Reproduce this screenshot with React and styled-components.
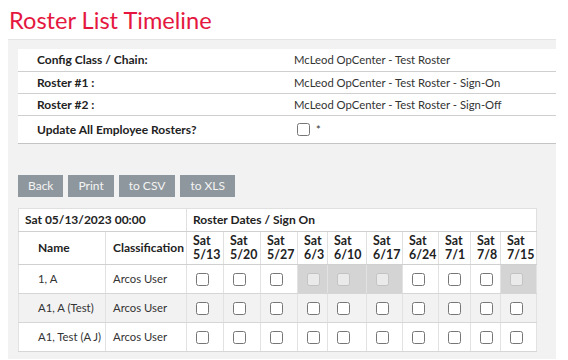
import React from "react";
import styled, { createGlobalStyle } from "styled-components";

const Global = createGlobalStyle`
  html, body { margin: 0; padding: 0; background: #fff; }
  body { font-family: Lato, "Open Sans", Arial, sans-serif; color: #222; }
`;

const Page = styled.div`
  padding: 0 8px;
  width: 548px;
`;

const Title = styled.h1`
  margin: 7px 0 6px 1px;
  font-size: 23.6px;
  line-height: 26px;
  font-weight: 400;
  color: #e5173f;
`;

const Panel = styled.div`
  background: #f2f2f2;
  border-top: 1px solid #e4e4e4;
  padding: 9px 0 7px 10px;
`;

const InfoTable = styled.table`
  width: 538px;
  border-collapse: collapse;
  table-layout: fixed;
  background: #fff;
  font-size: 12px;
`;

const InfoRow = styled.tr`
  height: ${(p) => (p.$tall ? "28px" : "22px")};
  border-bottom: 1px solid ${(p) => (p.$last ? "#c4c4c4" : "#cfcfcf")};
`;

const InfoLabel = styled.td`
  padding: 0 4px 0 19px;
  font-weight: 700;
  color: #222;
  line-height: 15px;
`;

const InfoValue = styled.td`
  padding: 0 4px 0 7px;
  font-size: 11.3px;
  color: #333;
  line-height: 15px;
`;

const Check = styled.input.attrs({ type: "checkbox" })`
  width: 13px;
  height: 13px;
  margin: 0 0 0 ${(p) => p.$left || 0}px;
  vertical-align: middle;
`;

const Star = styled.span`
  margin-left: 6px;
  font-size: 11px;
  vertical-align: middle;
`;

const Toolbar = styled.div`
  display: flex;
  gap: 5px;
  margin-top: 31px;
`;

const Button = styled.button`
  height: 22px;
  padding: 0 ${(p) => p.$pad || 10}px;
  border: none;
  background: #8e979d;
  color: #f4f4f4;
  font-family: Lato, Arial, sans-serif;
  font-size: 12px;
  line-height: 22px;
  cursor: pointer;
`;

const Grid = styled.table`
  margin-top: 11px;
  border-collapse: collapse;
  table-layout: fixed;
  width: 518px;
  background: #fff;
  font-size: 12px;
  border: 1px solid #d0d0d0;
  border-top-color: #e4e4e4;
`;

const HeadCell = styled.th`
  text-align: left;
  font-weight: 700;
  color: #222;
  padding: 0 ${(p) => (p.$indent ? "4px 0 " + p.$indent + "px" : "1px 0 6px")};
  border: 1px solid #e0e0e0;
  border-bottom-color: #d0d0d0;
  line-height: 14px;
  vertical-align: middle;
  white-space: nowrap;
  font-size: ${(p) => (p.$date ? "12.4px" : "12px")};
`;

const HeadRow = styled.tr`
  height: ${(p) => p.$h}px;
`;

const BodyRow = styled.tr`
  height: 29px;
  background: ${(p) => (p.$alt ? "#f2f2f2" : "#fff")};
  border-bottom: 1px solid #d6d6d6;
`;

const Cell = styled.td`
  padding: 0 0 0 ${(p) => p.$indent || 7}px;
  font-size: 11.3px;
  color: #333;
  border: 1px solid #e2e2e2;
  border-bottom-color: #d6d6d6;
  white-space: nowrap;
`;

const BoxCell = styled.td`
  text-align: left;
  padding: 0 0 0 9px;
  border: 1px solid #e2e2e2;
  border-bottom-color: #d6d6d6;
  background: ${(p) => (p.$off ? "#d4d4d4" : "transparent")};
`;

const dates = [
  ["5/13", 37], ["5/20", 37], ["5/27", 37], ["6/3", 30], ["6/10", 39],
  ["6/17", 36], ["6/24", 36], ["7/1", 32], ["7/8", 30], ["7/15", 36],
];

const people = [
  { name: "1, A", off: [3, 4, 5, 9] },
  { name: "A1, A (Test)", off: [] },
  { name: "A1, Test (A J)", off: [] },
];

export default function App() {
  return (
    <Page>
      <Global />
      <Title>Roster List Timeline</Title>
      <Panel>
        <InfoTable>
          <colgroup>
            <col style={{ width: 269 }} />
            <col style={{ width: 269 }} />
          </colgroup>
          <tbody>
            <InfoRow>
              <InfoLabel>Config Class / Chain:</InfoLabel>
              <InfoValue>McLeod OpCenter - Test Roster</InfoValue>
            </InfoRow>
            <InfoRow>
              <InfoLabel>Roster #1 :</InfoLabel>
              <InfoValue>McLeod OpCenter - Test Roster - Sign-On</InfoValue>
            </InfoRow>
            <InfoRow>
              <InfoLabel>Roster #2 :</InfoLabel>
              <InfoValue>McLeod OpCenter - Test Roster - Sign-Off</InfoValue>
            </InfoRow>
            <InfoRow $tall $last>
              <InfoLabel>Update All Employee Rosters?</InfoLabel>
              <InfoValue>
                <Check $left={3} />
                <Star>*</Star>
              </InfoValue>
            </InfoRow>
          </tbody>
        </InfoTable>

        <Toolbar>
          <Button $pad={10}>Back</Button>
          <Button $pad={10}>Print</Button>
          <Button $pad={10}>to CSV</Button>
          <Button $pad={10}>to XLS</Button>
        </Toolbar>

        <Grid>
          <colgroup>
            <col style={{ width: 87 }} />
            <col style={{ width: 81 }} />
            {dates.map(([d, w]) => (
              <col key={d} style={{ width: w }} />
            ))}
          </colgroup>
          <thead>
            <HeadRow $h={23}>
              <HeadCell colSpan={2} $indent={6}>Sat 05/13/2023 00:00</HeadCell>
              <HeadCell colSpan={10} $indent={6}>Roster Dates / Sign On</HeadCell>
            </HeadRow>
            <HeadRow $h={33}>
              <HeadCell $indent={19}>Name</HeadCell>
              <HeadCell $indent={7}>Classification</HeadCell>
              {dates.map(([d]) => (
                <HeadCell key={d} $date>
                  Sat
                  <br />
                  {d}
                </HeadCell>
              ))}
            </HeadRow>
          </thead>
          <tbody>
            {people.map((p, i) => (
              <BodyRow key={p.name} $alt={i === 1}>
                <Cell $indent={19}>{p.name}</Cell>
                <Cell $indent={7}>Arcos User</Cell>
                {dates.map(([d], j) => {
                  const off = p.off.includes(j);
                  return (
                    <BoxCell key={d} $off={off}>
                      <Check disabled={off} />
                    </BoxCell>
                  );
                })}
              </BodyRow>
            ))}
          </tbody>
        </Grid>
      </Panel>
    </Page>
  );
}
